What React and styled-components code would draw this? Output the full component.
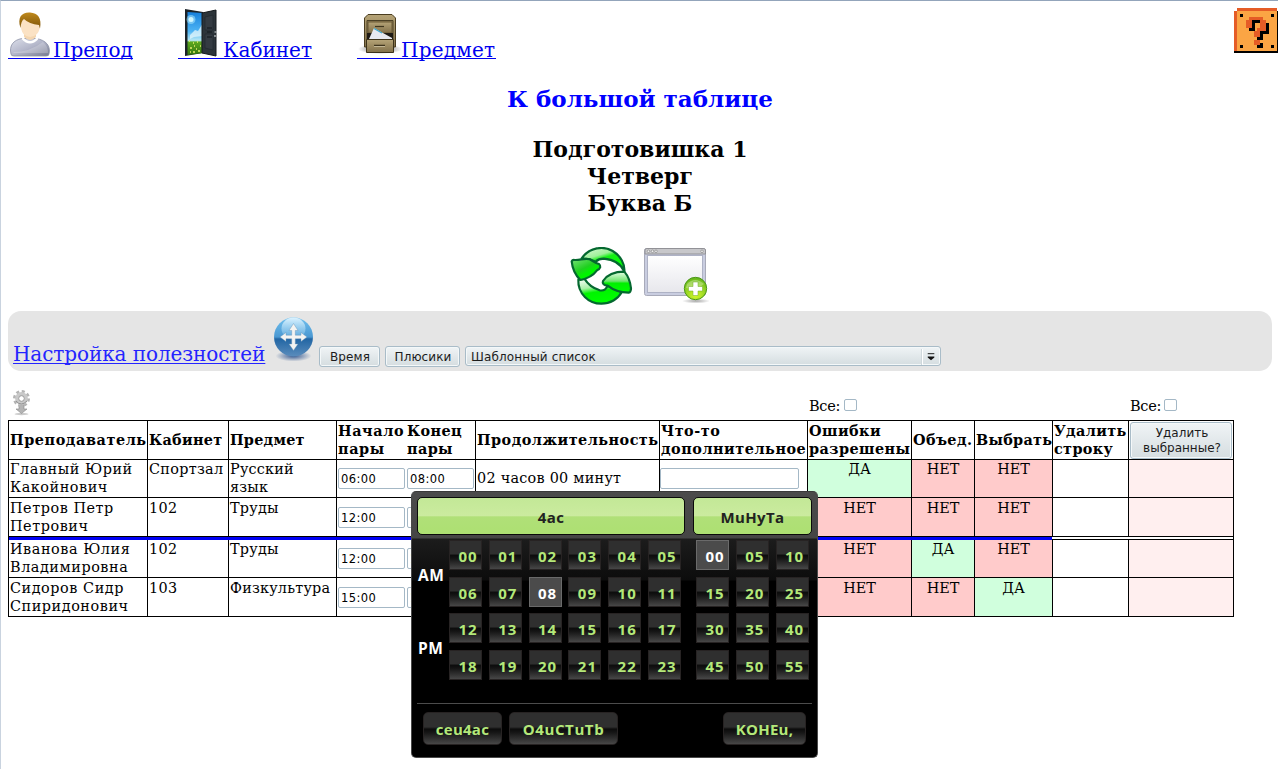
import React from "react";
import styled, { createGlobalStyle } from "styled-components";

const Global = createGlobalStyle`
  * { box-sizing: border-box; }
  html, body { margin: 0; padding: 0; background: #fff; }
  body { font-family: "DejaVu Serif", serif; color: #000; overflow: hidden; }
`;

const Page = styled.div`
  width: 1278px;
  height: 769px;
  border-top: 1px solid #93a5bb;
  border-left: 1px solid #c9d3df;
  padding: 7px 0 0 7px;
  overflow: hidden;
  position: relative;
`;

const Nav = styled.nav`
  display: flex;
  align-items: flex-start;
  gap: 45px;
  height: 78px;
`;

const NavLink = styled.a`
  display: flex;
  align-items: flex-end;
  width: ${(p) => p.$w}px;
  height: 51px;
  border-bottom: 1px solid #0000f0;
  color: #0000f0;
  font-size: 20px;
  line-height: 16px;
  letter-spacing: ${(p) => p.$ls || 0}px;
  white-space: nowrap;
  text-decoration: none;
  svg { flex: none; display: block; }
`;

const HelpButton = styled.a`
  margin-left: auto;
  display: block;
  width: 44px;
  height: 45px;
  svg { display: block; }
`;

const Center = styled.header`
  width: 1264px;
  display: flex;
  flex-direction: column;
  align-items: center;
  font-weight: bold;
  font-size: 22px;
  line-height: 27px;
  height: 225px;
`;

const BigLink = styled.a`
  color: #0000ff;
  font-size: 23px;
  line-height: 25px;
  margin-bottom: 25px;
`;

const Heading = styled.div`
  white-space: nowrap;
`;

const Actions = styled.div`
  display: flex;
  gap: 9px;
  margin: 30px 1px 0 0;
  svg { display: block; }
`;

const Settings = styled.section`
  display: flex;
  width: 1264px;
  height: 60px;
  padding-left: 5px;
  border-radius: 13px;
  background: #e5e5e5;
  svg { flex: none; }
`;

const SettingsLink = styled.a`
  width: 252px;
  height: 23px;
  margin: 32px 8px 0 0;
  font-size: 20px;
  line-height: 23px;
  letter-spacing: -0.09px;
  color: #2424ff;
  text-decoration: underline;
  text-decoration-thickness: 1px;
  text-underline-offset: 2px;
  text-decoration-skip-ink: none;
  white-space: nowrap;
`;

const SkinButton = styled.button`
  width: ${(p) => p.$w}px;
  height: ${(p) => p.$h || 21}px;
  margin: ${(p) => p.$m || "0"};
  padding: ${(p) => p.$pad || "1px 0 0 1px"};
  border: 1px solid #a9bcc8;
  border-radius: 3px;
  background: linear-gradient(#f0f4f6, #d5dde0);
  box-shadow: inset 0 0 0 1px #f4f8f9;
  color: #1c1c1c;
  font-family: "DejaVu Sans", sans-serif;
  font-size: 12px;
  line-height: 15px;
  letter-spacing: ${(p) => p.$ls ?? 0.1}px;
  white-space: pre-line;
`;

const Combo = styled.div`
  display: flex;
  align-items: center;
  justify-content: space-between;
  width: 476px;
  height: 20px;
  margin: 35px 0 0 5px;
  padding: 1px 0 0 5px;
  border: 1px solid #a9bcc8;
  border-radius: 3px;
  background: linear-gradient(#f0f4f6, #d5dde0);
  box-shadow: inset 0 0 0 1px #f4f8f9;
  color: #1c1c1c;
  font-family: "DejaVu Sans", sans-serif;
  font-size: 12px;
  letter-spacing: 0.13px;
  svg { display: block; border-left: 1px solid #fff; box-shadow: -1px 0 0 #cfd8dc; }
`;

const TopRow = styled.div`
  display: flex;
  height: 49px;
  padding: 18px 0 0 4px;
  font-size: 14.5px;
`;

const AllToggle = styled.label`
  display: flex;
  width: 80px;
  height: 18px;
  line-height: 18px;
  letter-spacing: -0.3px;
  margin-top: 8px;
  margin-left: ${(p) => p.$ml}px;
`;

const Check = styled.span`
  width: 13px;
  height: 12px;
  margin: ${(p) => p.$m || "2px 0 0 4px"};
  border: 1px solid #a4b8c6;
  border-radius: 2px;
`;

const Table = styled.div`
  width: 1226px;
  border-left: 1px solid #000;
  border-top: 1px solid #000;
  font-size: 14.4px;
  line-height: 18px;
`;

const Row = styled.div`
  display: grid;
  grid-template-columns: 139px 81px 108px 70px 69px 184px 148px 104px 63px 78px 76px 105px;
  height: ${(p) => p.$h}px;
`;

const tones = { yes: "#d0ffdd", no: "#ffcbcb", pale: "#ffefef" };

const Cell = styled.div`
  display: flex;
  min-width: 0;
  padding: ${(p) => p.$pad || "0 0 0 1px"};
  align-items: ${(p) => p.$v || "flex-start"};
  justify-content: ${(p) => (p.$tone ? "center" : "flex-start")};
  border-right: ${(p) => (p.$open ? "0" : "1px solid #000")};
  border-bottom: 1px solid #000;
  background: ${(p) => tones[p.$tone] || "transparent"};
  letter-spacing: ${(p) => p.$ls ?? 0.3}px;
  font-weight: ${(p) => (p.$head ? "bold" : "normal")};
  white-space: pre;
`;

const Field = styled.input`
  width: ${(p) => p.$w}px;
  height: 21px;
  padding: 0 2px;
  border: 1px solid #a4b8c6;
  border-radius: 2px;
  font-family: "DejaVu Sans", sans-serif;
  font-size: 11.5px;
  letter-spacing: 0.4px;
  background: #fff;
`;

const Divider = styled.div`
  display: flex;
  height: 3px;
`;
const DividerBlue = styled.div`
  width: 1043px;
  background: #0000f4;
`;
const DividerPlain = styled.div`
  flex: 1;
  border-bottom: 1px solid #000;
  border-right: 1px solid #000;
`;

const Picker = styled.div`
  position: absolute;
  left: 410px;
  top: 490px;
  width: 407px;
  height: 267px;
  padding: 5px 5px 0;
  border: 1px solid #4a4a4a;
  border-top-color: #3a3a3a;
  border-radius: 5px;
  background: linear-gradient(#4b4b4b 0, #454545 46px, #1c1c1c 47px, #0c0c0c 88px, #000 89px);
  font-family: "Open Sans", "Noto Sans", sans-serif;
  font-weight: bold;
  font-size: 15px;
  color: #fff;
`;

const PickerHead = styled.div`
  display: flex;
  gap: 8px;
  height: 38px;
`;

const HeadLabel = styled.div`
  width: ${(p) => p.$w}px;
  height: 38px;
  border: 1px solid #0a0a0a;
  border-radius: 5px;
  background: linear-gradient(#c3e897, #cbeb9f 50%, #b0e078 52%, #ade072);
  color: #222;
  line-height: 39px;
  text-align: center;
  letter-spacing: 0.4px;
`;

const PickerBody = styled.div`
  display: flex;
  height: 169px;
  padding-top: 5px;
  border-bottom: 1px solid #4c4c4c;
`;

const HalfLabels = styled.div`
  flex: none;
  width: 32px;
  padding: 25px 0 0 1px;
  line-height: 20px;
  font-size: 15.5px;
  letter-spacing: 0.5px;
  div + div { margin-top: 53px; }
`;

const Numbers = styled.div`
  display: grid;
  flex: none;
  grid-template-columns: repeat(${(p) => p.$cols}, 33px);
  grid-template-rows: repeat(4, 30px);
  column-gap: 6.8px;
  row-gap: 6.6px;
  margin-right: 15px;
`;

const NumberTile = styled.div`
  border: 1px solid ${(p) => (p.$on ? "#6a6a6a" : "#272323")};
  background: ${(p) => (p.$on ? "#4b4b4b" : "linear-gradient(#2f2f2f 0, #2f2f2f 45%, #0c0c0c 52%, #151515 62%, #474747 100%)")};
  color: ${(p) => (p.$on ? "#fff" : "#b4e87a")};
  line-height: 31px;
  text-align: center;
  padding-left: 5px;
  font-size: 15px;
  letter-spacing: 1px;
`;

const PickerFoot = styled.div`
  display: flex;
  gap: 7px;
  padding: 8px 6px 0;
`;

const PickerButton = styled.button`
  width: ${(p) => p.$w}px;
  height: 33px;
  padding: 0;
  margin-left: ${(p) => (p.$end ? "auto" : "0")};
  border: 1px solid #272323;
  border-radius: 5px;
  background: linear-gradient(#2f2f2f 0, #2f2f2f 45%, #0c0c0c 52%, #151515 62%, #474747 100%);
  color: #b4e87a;
  font: bold 15px "Open Sans", "Noto Sans", sans-serif;
  letter-spacing: ${(p) => p.$ls ?? 0.25}px;
`;

function PersonIcon() {
  return (
    <svg width="45" height="50" viewBox="0 0 45 50">
      <defs>
        <linearGradient id="shirt" x1="0" y1="0" x2="1" y2="1">
          <stop offset="0" stopColor="#dcdfea" /><stop offset=".5" stopColor="#b4b7ca" /><stop offset="1" stopColor="#74788e" />
        </linearGradient>
        <linearGradient id="hair" x1="0" y1="0" x2="0" y2="1">
          <stop offset="0" stopColor="#c08a1c" /><stop offset="1" stopColor="#7c5208" />
        </linearGradient>
      </defs>
      <path d="M3 46C1 38 5 32 14 30.500L28 30.500C38 32 43 38 41 46Q41 48 38 48H6Q3 48 3 46Z" fill="url(#shirt)" stroke="#8c90a6" strokeWidth=".8" />
      <path d="M15 29Q22 37 29 29L30.500 31Q22 40 13.500 31Z" fill="#fff" />
      <path d="M16 29Q22 35 28 29L28 24H16V29Z" fill="#f4d6b0" />
      <path d="M12.500 15Q12 9 22 9Q32 9 32 15Q32.500 22 29 26Q22 32 15.500 26Q12.500 22 12.500 15Z" fill="#fbe2c4" />
      <path d="M12.500 20C9 9 14 4 22 4.500C30 5 34 10 32 20.500Q31.500 19 31 17Q21 16 16 11Q13 13 12.500 20Z" fill="url(#hair)" />
      <path d="M5 44Q22 44 35 34Q40 38 40 45H6Z" fill="#fff" opacity=".22" />
    </svg>
  );
}

function DoorIcon() {
  return (
    <svg width="45" height="50" viewBox="0 0 45 50">
      <defs>
        <linearGradient id="sky" x1="0" y1="0" x2="0" y2="1">
          <stop offset="0" stopColor="#1680dc" /><stop offset=".45" stopColor="#4eb4f4" /><stop offset=".66" stopColor="#b8e8f4" /><stop offset=".7" stopColor="#5ca91e" /><stop offset="1" stopColor="#347410" />
        </linearGradient>
      </defs>
      <path d="M7 1L25 4V45L7 48Z" fill="#1b2228" />
      <path d="M9.500 4L25 5V45L9.500 47Z" fill="url(#sky)" />
      <circle cx="13" cy="11.500" r="2.500" fill="#e8fcff" /><circle cx="13" cy="11.500" r="4.500" fill="#b8f0ff" opacity=".5" />
      <path d="M12 27L17 22L20 23L25 15V28L16 29L12 31Z" fill="#e4f7fc" opacity=".75" />
      <path d="M11 33h1M15 35h1M19 34h1M22 38h1M12 40h2M18 41h1M15 44h2M20 43h2M12 44h1M16 38h1" stroke="#e8ec6c" strokeWidth="1.400" />
      <path d="M24 5L38 2V48L24 45Z" fill="#2c343a" stroke="#14191c" />
      <path d="M27 9L35 7V22L27 22Z M27 26H35V42L27 40Z" fill="#343b42" stroke="#22292e" strokeWidth=".7" />
      <path d="M29 20h5M29 24h5M29 29h5" stroke="#11171a" /><path d="M36.500 24h2M36 28h2" stroke="#dce1e4" strokeWidth="1.200" />
    </svg>
  );
}

function CabinetIcon() {
  return (
    <svg width="44" height="50" viewBox="0 0 44 50">
      <defs>
        <linearGradient id="wood" x1="0" y1="0" x2="0" y2="1">
          <stop offset="0" stopColor="#b6a477" /><stop offset="1" stopColor="#81704a" />
        </linearGradient>
        <radialGradient id="cabShadow"><stop offset="0" stopColor="#000" stopOpacity=".65" /><stop offset="1" stopColor="#000" stopOpacity="0" /></radialGradient>
      </defs>
      <ellipse cx="23" cy="41" rx="22" ry="5" fill="url(#cabShadow)" />
      <path d="M7.500 10L11 6.500H35L38.500 10V39H7.500Z" fill="url(#wood)" stroke="#4a3d20" />
      <path d="M10 12.500H36V38H10Z" fill="#8e7d54" stroke="#4c4125" />
      <path d="M11 14H35V25H11Z" fill="url(#wood)" stroke="#695934" />
      <path d="M18 18.500H27" stroke="#41371e" strokeWidth="1.200" />
      <path d="M10 25H36V32H10Z" fill="#1e1a14" />
      <path d="M12 31L17 20L35 30V33H12Z" fill="#e6e8ef" /><path d="M17 20.500L25 25" stroke="#3ca6cc" strokeWidth="1.300" />
      <path d="M9.500 31.500H36.500V44.500H9.500Z" fill="url(#wood)" stroke="#3c321a" />
      <path d="M17 37.500H28" stroke="#41371e" strokeWidth="1.500" /><path d="M17 38.500H28" stroke="#efe4c4" strokeWidth=".6" />
    </svg>
  );
}

const BLOCK_MARK = [
  [15, 9, 14, 3], [12, 12, 6, 8], [26, 12, 6, 8], [23, 20, 9, 3], [20, 23, 6, 6], [20, 32, 6, 5],
];

function QuestionBlock() {
  return (
    <svg width="44" height="45" viewBox="0 0 44 45" shapeRendering="crispEdges">
      <rect x="3" y="3" width="41" height="42" fill="#000" />
      <rect x="0" y="43" width="44" height="2" fill="#000" />
      <path d="M3 0H43V3H3V43H0V3H3Z" fill="#e55c26" />
      <rect x="3" y="3" width="40" height="40" fill="#fba544" />
      <path d="M6 6h3v3h-3zM37 6h3v3h-3zM6 37h3v3h-3zM37 37h3v3h-3z" fill="#000" />
      {BLOCK_MARK.map(([x, y, w, h], i) => <rect key={i} x={x + 3} y={y + 3} width={w} height={h} fill="#000" />)}
      {BLOCK_MARK.map(([x, y, w, h], i) => <rect key={i} x={x} y={y} width={w} height={h} fill="#e55c26" />)}
    </svg>
  );
}

function RefreshIcon() {
  return (
    <svg width="64" height="60" viewBox="59 36 192 180">
      <defs>
        <linearGradient id="arcTop" x1=".2" y1="0" x2=".7" y2=".9"><stop offset="0" stopColor="#10e010" /><stop offset=".12" stopColor="#bff5bb" /><stop offset=".35" stopColor="#9ff09a" /><stop offset=".5" stopColor="#14f014" /><stop offset="1" stopColor="#00ff00" /></linearGradient>
        <linearGradient id="headLeft" x1="0" y1="0" x2=".7" y2="1"><stop offset="0" stopColor="#7be07b" /><stop offset=".5" stopColor="#1fd01f" /><stop offset=".7" stopColor="#00f400" /></linearGradient>
        <linearGradient id="headRight" x1="0" y1="0" x2="0" y2="1"><stop offset="0" stopColor="#e8ffe8" /><stop offset=".45" stopColor="#6fe46f" /><stop offset=".55" stopColor="#00f000" /><stop offset="1" stopColor="#00ff00" /></linearGradient>
        <linearGradient id="arcBottom" x1="0" y1="0" x2=".3" y2="1"><stop offset="0" stopColor="#fff" /><stop offset=".4" stopColor="#a8f0a8" /><stop offset=".6" stopColor="#00f400" /><stop offset="1" stopColor="#00ff00" /></linearGradient>
      </defs>
      <g stroke="#04682f" strokeWidth="6.500" strokeLinejoin="round">
        <path d="M94 70C118 36 160 32 187 48C212 63 224 88 222 110C212 88 190 73 160 71Q145 71 136 80L118 73Z" fill="url(#arcTop)" />
        <path d="M84 134C82 176 115 206 153 206C180 206 203 192 214 172L172 152C167 164 158 168 148 166C128 160 112 147 102 131Z" fill="url(#arcBottom)" />
        <path d="M64 79Q66 74 73 75C90 76 104 68 118 73C128 78 134 84 146 87C153 93 151 101 140 106C128 122 114 130 90 135C75 120 66 100 64 79Z" fill="url(#headLeft)" />
        <path d="M222 110C194 110 170 120 158 138C155 146 161 152 172 152C186 163 204 173 235 173Q242 172 242 160C240 140 234 124 222 110Z" fill="url(#headRight)" />
      </g>
    </svg>
  );
}

function WindowAddIcon() {
  return (
    <svg width="66" height="60" viewBox="0 0 66 60">
      <defs>
        <linearGradient id="pane" x1="0" y1="0" x2="0" y2="1"><stop offset="0" stopColor="#fff" /><stop offset="1" stopColor="#e7e7ec" /></linearGradient>
        <radialGradient id="plus" cx=".5" cy=".8" r=".8"><stop offset="0" stopColor="#d4fa2c" /><stop offset="1" stopColor="#62b41c" /></radialGradient>
        <radialGradient id="plusShadow"><stop offset="0" stopColor="#000" stopOpacity=".35" /><stop offset="1" stopColor="#000" stopOpacity="0" /></radialGradient>
      </defs>
      <ellipse cx="53" cy="54" rx="14" ry="2.500" fill="url(#plusShadow)" />
      <rect x="1.500" y="1.500" width="61" height="47" rx="2" fill="#c9cde0" stroke="#a8aab9" />
      <path d="M2 7V3Q2 1.500 4 1.500H60Q62.500 1.500 62.500 3V7Z" fill="#c7c7ca" stroke="#929297" />
      <g fill="#eee" stroke="#888" strokeWidth=".7"><circle cx="5.500" cy="4.300" r="1.300" /><circle cx="9.500" cy="4.300" r="1.300" /><circle cx="13" cy="4.300" r="1.300" /><circle cx="59" cy="4.300" r="1.300" /></g>
      <rect x="4.500" y="8.500" width="55" height="37" fill="url(#pane)" stroke="#aeb2c5" />
      <circle cx="52.500" cy="41.500" r="11.200" fill="url(#plus)" stroke="#4c981a" />
      <path d="M44 37Q52 29 61 37Q54 43 43 41Z" fill="#fff" opacity=".3" />
      <path d="M50 35H55V39.500H59.500V44H55V48.500H50V44H45.500V39.500H50Z" fill="#fff" stroke="#6ea929" strokeWidth=".5" />
    </svg>
  );
}

function MoveIcon() {
  return (
    <svg width="41" height="56" viewBox="0 -6 41 56">
      <defs>
        <linearGradient id="ball" x1="0" y1="0" x2="0" y2="1"><stop offset="0" stopColor="#70c0ee" /><stop offset=".5" stopColor="#4a98d2" /><stop offset=".55" stopColor="#2266a4" /><stop offset="1" stopColor="#5a8cbc" /></linearGradient>
        <linearGradient id="gloss" x1="0" y1="0" x2="0" y2="1"><stop offset="0" stopColor="#ddf3ff" /><stop offset="1" stopColor="#7cc0e9" stopOpacity=".35" /></linearGradient>
        <radialGradient id="ballShadow"><stop offset="0" stopColor="#254c89" stopOpacity=".9" /><stop offset="1" stopColor="#254c89" stopOpacity="0" /></radialGradient>
      </defs>
      <ellipse cx="20.500" cy="39" rx="18" ry="5.500" fill="url(#ballShadow)" />
      <circle cx="20.500" cy="20" r="19.500" fill="url(#ball)" />
      <ellipse cx="20.500" cy="11.500" rx="12" ry="11" fill="url(#gloss)" />
      <path d="M20.500 6.500L25 13.500H22.300V18.200H28V15.500L34 20L28 24.500V21.800H22.300V27H25L20.500 33.500L16 27H18.700V21.800H13V24.500L7 20L13 15.500V18.200H18.700V13.500H16Z" fill="#f4f4f2" stroke="#608eb4" strokeWidth=".4" />
    </svg>
  );
}

function GearDownIcon() {
  return (
    <svg width="19" height="27" viewBox="0 0 19 27">
      <ellipse cx="9.500" cy="25" rx="7" ry="1.200" fill="#ccc" />
      <path d="M7 15H12V20H15L9.500 24.500L4 20H7Z" fill="#b4b4b4" stroke="#888" strokeWidth=".6" />
      <circle cx="9.500" cy="9.500" r="7" fill="none" stroke="#b4b4b4" strokeWidth="3" strokeDasharray="3 2.500" />
      <circle cx="9.500" cy="9.500" r="4.600" fill="#fff" stroke="#c9c9c9" strokeWidth="3.600" />
      <circle cx="9.500" cy="9.500" r="2.800" fill="#fff" stroke="#858585" strokeWidth=".8" />
      <path d="M4 12Q9 18 15 12" fill="none" stroke="#929292" />
    </svg>
  );
}

const HEADS = [
  { text: "Преподаватель", mid: true, ls: 0.58 },
  { text: "Кабинет", mid: true, ls: 0.33 },
  { text: "Предмет", mid: true, ls: 0.25 },
  { text: "Начало\nпары", ls: 0.6 },
  { text: "Конец\nпары", ls: 0.4 },
  { text: "Продолжительность", mid: true, ls: 0.48 },
  { text: "Что-то\nдополнительное", ls: 0.52 },
  { text: "Ошибки\nразрешены", ls: 0.45 },
  { text: "Объед.", mid: true, ls: 0.4 },
  { text: "Выбрать", mid: true, ls: 0.3 },
  { text: "Удалить\nстроку", ls: 0.35 },
];

const LESSONS = [
  { h: 38, who: "Главный Юрий\nКакойнович", room: "Спортзал", subject: "Русский\nязык", from: "06:00", to: "08:00", span: "02 часов 00 минут", flags: [1, 0, 0] },
  { h: 39, who: "Петров Петр\nПетрович", room: "102", subject: "Труды", from: "12:00", to: "14:00", flags: [0, 0, 0] },
  { h: 38, who: "Иванова Юлия\nВладимировна", room: "102", subject: "Труды", from: "12:00", to: "14:00", flags: [0, 1, 0] },
  { h: 39, who: "Сидоров Сидр\nСпиридонович", room: "103", subject: "Физкультура", from: "15:00", to: "17:00", flags: [0, 0, 1] },
];

function LessonRow({ lesson }) {
  const top = lesson.h - 38;
  const textPad = `${top}px 0 0 1px`;
  const fieldPad = `${top}px 0 0 0`;
  return (
    <Row $h={lesson.h}>
      <Cell $pad={textPad} $ls={0.55}>{lesson.who}</Cell>
      <Cell $pad={textPad}>{lesson.room}</Cell>
      <Cell $pad={textPad} $ls={0.2}>{lesson.subject}</Cell>
      <Cell $v="center" $open $pad={`${top}px 0 0 1px`}><Field $w={67} defaultValue={lesson.from} /></Cell>
      <Cell $v="center" $pad={fieldPad}><Field $w={67} defaultValue={lesson.to} /></Cell>
      <Cell $v="center" $ls={0.25} $pad="0 0 2px 1px">{lesson.span}</Cell>
      <Cell $v="center" $pad={fieldPad}><Field $w={139} /></Cell>
      {lesson.flags.map((f, i) => <Cell key={i} $tone={f ? "yes" : "no"} $ls={0} $pad={fieldPad}>{f ? "ДА" : "НЕТ"}</Cell>)}
      <Cell />
      <Cell $tone="pale" />
    </Row>
  );
}

const pad2 = (n) => String(n).padStart(2, "0");

function TimePicker() {
  return (
    <Picker>
      <PickerHead>
        <HeadLabel $w={268}>4ac</HeadLabel>
        <HeadLabel $w={119}>MuHyTa</HeadLabel>
      </PickerHead>
      <PickerBody>
        <HalfLabels><div>AM</div><div>PM</div></HalfLabels>
        <Numbers $cols={6}>
          {Array.from({ length: 24 }, (_, n) => <NumberTile key={n} $on={n === 8}>{pad2(n)}</NumberTile>)}
        </Numbers>
        <Numbers $cols={3}>
          {Array.from({ length: 12 }, (_, n) => <NumberTile key={n} $on={n === 0}>{pad2(n * 5)}</NumberTile>)}
        </Numbers>
      </PickerBody>
      <PickerFoot>
        <PickerButton $w={79}>ceu4ac</PickerButton>
        <PickerButton $w={109} $ls={0.6}>O4uCTuTb</PickerButton>
        <PickerButton $w={83} $end>KOHEu,</PickerButton>
      </PickerFoot>
    </Picker>
  );
}

export default function App() {
  return (
    <Page>
      <Global />
      <Nav>
        <NavLink $w={125}><PersonIcon />Препод</NavLink>
        <NavLink $w={134}><DoorIcon />Кабинет</NavLink>
        <NavLink $w={139} $ls={0.2}><CabinetIcon />Предмет</NavLink>
        <HelpButton><QuestionBlock /></HelpButton>
      </Nav>
      <Center>
        <BigLink>К большой таблице</BigLink>
        <Heading>Подготовишка 1</Heading>
        <Heading>Четверг</Heading>
        <Heading>Буква Б</Heading>
        <Actions><RefreshIcon /><WindowAddIcon /></Actions>
      </Center>
      <Settings>
        <SettingsLink>Настройка полезностей</SettingsLink>
        <MoveIcon />
        <SkinButton $w={61} $m="35px 0 0 5px">Время</SkinButton>
        <SkinButton $w={75} $m="35px 0 0 5px">Плюсики</SkinButton>
        <Combo>
          Шаблонный список
          <svg width="18" height="16" viewBox="0 0 18 16"><path d="M5 4.500H12" stroke="#111" /><path d="M5 7.500H12V8.500L8.500 11.500L5 8.500Z" fill="#111" /></svg>
        </Combo>
      </Settings>
      <TopRow>
        <GearDownIcon />
        <AllToggle $ml={778}>Все:<Check /></AllToggle>
        <AllToggle $ml={241}>Все:<Check $m="2px 0 0 3px" /></AllToggle>
      </TopRow>
      <Table>
        <Row $h={39}>
          {HEADS.map(({ text, mid, ls }, i) => (
            <Cell key={i} $head $ls={ls} $v={mid ? "center" : "flex-start"} $open={i === 3} $pad={mid ? "0 0 0 1px" : i === 4 ? "1px 0 0 0" : "1px 0 0 1px"}>{text}</Cell>
          ))}
          <Cell $pad="1px 0 0 1px" $ls={0}><SkinButton $w={102} $h={37} $pad="0 0 0 2px" $ls={0}>{"Удалить\nвыбранные?"}</SkinButton></Cell>
        </Row>
        <LessonRow lesson={LESSONS[0]} />
        <LessonRow lesson={LESSONS[1]} />
        <Divider><DividerBlue /><DividerPlain /></Divider>
        <LessonRow lesson={LESSONS[2]} />
        <LessonRow lesson={LESSONS[3]} />
      </Table>
      <TimePicker />
    </Page>
  );
}
